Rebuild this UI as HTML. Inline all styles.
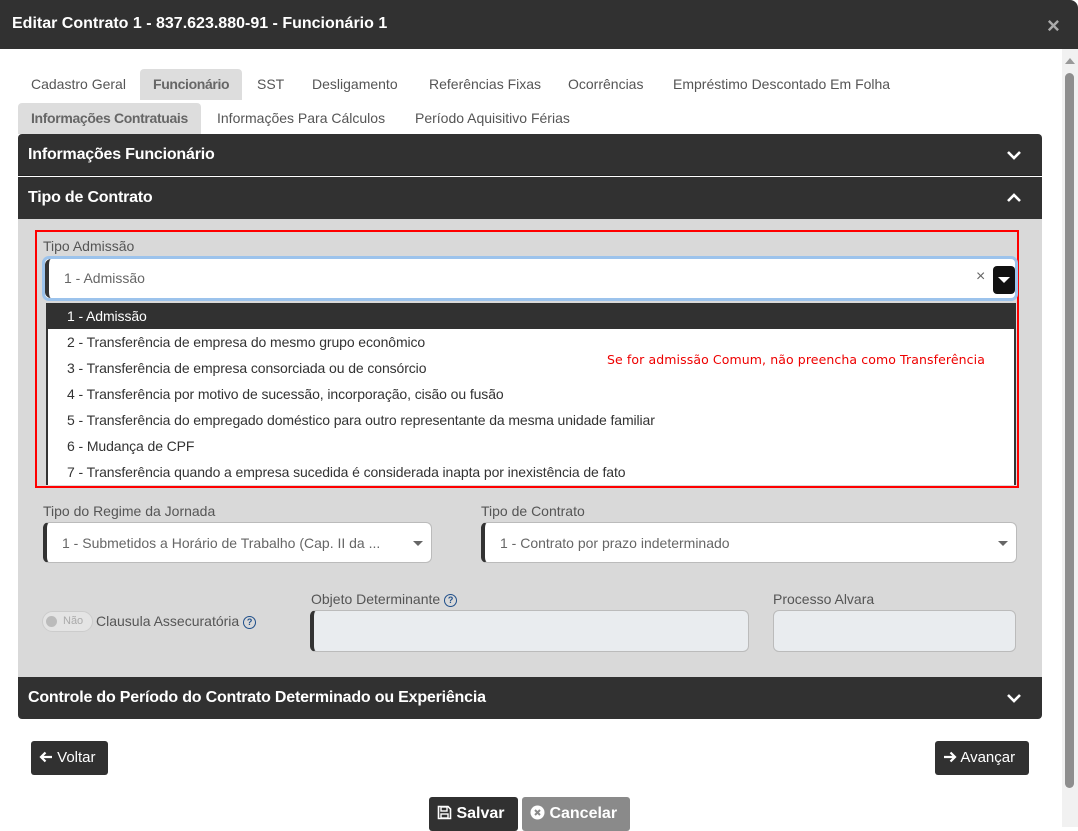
<!DOCTYPE html>
<html><head><meta charset="utf-8"><style>
*{box-sizing:border-box;margin:0;padding:0}
body{width:1078px;height:827px;overflow:hidden;background:#fff;font-family:"Liberation Sans",Arial,sans-serif;position:relative;color:#333}
.a{position:absolute}
.hdr{left:0;top:0;width:1078px;height:49px;background:#313131;border-radius:0 8px 0 0}
.hdr .t{left:12px;top:15px;color:#fff;font-weight:bold;font-size:16px}
.hdr .x{left:1047px;top:13px;color:#aaa;font-size:22px;font-weight:bold}
.tab{font-size:14px;color:#555;height:31px;line-height:31px;padding:0 13px}
.tab.on{background:#ddd;color:#666;font-weight:bold;border-radius:4px 4px 0 0;letter-spacing:-0.35px}
.acc{left:18px;width:1024px;height:42px;background:#313131;color:#fff;font-weight:bold;font-size:16px;line-height:42px;padding-left:10px;letter-spacing:-0.2px}
.chev{position:absolute;right:20px;top:15px}
.lbl{font-size:14px;color:#555}
.sel{background:#fff;border-radius:6px;border-left:4px solid #333;font-size:14px;color:#666;padding-left:15px}
.item{left:46px;width:970px;height:26px;line-height:26px;font-size:14px;color:#333;padding-left:21px;background:#fff;letter-spacing:-0.1px}
.btn{background:#313131;color:#fff;font-size:15px;border-radius:3px;height:34px;line-height:34px;padding:0 8px}
.inp{background:#e9ecef;border:1px solid #bbb;border-radius:6px}
.q{display:inline-block;width:13px;height:13px;border:1.3px solid #1f4f8a;border-radius:50%;font-size:9px;line-height:11px;text-align:center;color:#1f4f8a;font-weight:bold;vertical-align:1px}
</style></head><body>
<div class="a hdr"><div class="a t">Editar Contrato 1 - 837.623.880-91 - Funcionário 1</div><div class="a x">×</div></div>
<div class="a" style="left:1062px;top:49px;width:16px;height:778px;background:#f1f1f1"></div>
<div class="a" style="left:1065px;top:73px;width:9px;height:715px;background:#8e8e8e;border-radius:5px"></div>
<div class="a" style="left:1065px;top:58px;width:0;height:0;border-left:5px solid transparent;border-right:5px solid transparent;border-bottom:6px solid #999"></div>

<div class="a tab" style="left:18px;top:69px">Cadastro Geral</div>
<div class="a tab on" style="left:140px;top:69px">Funcionário</div>
<div class="a tab" style="left:244px;top:69px">SST</div>
<div class="a tab" style="left:299px;top:69px">Desligamento</div>
<div class="a tab" style="left:416px;top:69px">Referências Fixas</div>
<div class="a tab" style="left:555px;top:69px">Ocorrências</div>
<div class="a tab" style="left:660px;top:69px">Empréstimo Descontado Em Folha</div>
<div class="a tab on" style="left:18px;top:103px">Informações Contratuais</div>
<div class="a tab" style="left:204px;top:103px">Informações Para Cálculos</div>
<div class="a tab" style="left:402px;top:103px">Período Aquisitivo Férias</div>

<div class="a acc" style="top:134px;border-radius:4px 4px 0 0;border-bottom:1px solid #222">Informações Funcionário<svg class="chev" width="16" height="12" viewBox="0 0 16 12"><path d="M2 3l6 6 6-6" stroke="#fff" stroke-width="2.6" fill="none"/></svg></div>
<div class="a acc" style="top:177px">Tipo de Contrato<svg class="chev" width="16" height="12" viewBox="0 0 16 12"><path d="M2 9l6-6 6 6" stroke="#fff" stroke-width="2.6" fill="none"/></svg></div>
<div class="a" style="left:18px;top:219px;width:1024px;height:458px;background:#d9d9d9"></div>

<div class="a" style="left:35px;top:230px;width:984px;height:258px;border:2px solid #f00"></div>
<div class="a lbl" style="left:43px;top:238px">Tipo Admissão</div>
<div class="a" style="left:42px;top:256px;width:976px;height:45px;border:3px solid #9cc3ec;border-radius:7px;background:#fff"></div>
<div class="a sel" style="left:45px;top:259px;width:970px;height:39px;line-height:39px">1 - Admissão</div>
<div class="a" style="left:976px;top:268px;color:#666;font-size:16px">×</div>
<div class="a" style="left:993px;top:266px;width:22px;height:28px;background:#111;border-radius:4px"><div class="a" style="left:5px;top:11px;border-left:6px solid transparent;border-right:6px solid transparent;border-top:6px solid #fff"></div></div>
<div class="a" style="left:46px;top:303px;width:970px;height:182px;background:#fff;border-left:2px solid #333;border-right:2px solid #333"></div>
<div class="a item" style="top:303px;background:#313131;color:#fff">1 - Admissão</div>
<div class="a item" style="top:329px;left:48px;width:966px;padding-left:19px">2 - Transferência de empresa do mesmo grupo econômico</div>
<div class="a item" style="top:355px;left:48px;width:540px;padding-left:19px">3 - Transferência de empresa consorciada ou de consórcio</div>
<div class="a item" style="top:381px;left:48px;width:540px;padding-left:19px">4 - Transferência por motivo de sucessão, incorporação, cisão ou fusão</div>
<div class="a item" style="top:407px;left:48px;width:700px;padding-left:19px">5 - Transferência do empregado doméstico para outro representante da mesma unidade familiar</div>
<div class="a item" style="top:433px;left:48px;width:540px;padding-left:19px">6 - Mudança de CPF</div>
<div class="a item" style="top:459px;left:48px;width:700px;padding-left:19px">7 - Transferência quando a empresa sucedida é considerada inapta por inexistência de fato</div>
<div class="a" style="left:607px;top:352px;color:#e00;font-size:12.5px;font-family:'DejaVu Sans',sans-serif;letter-spacing:0.1px">Se for admissão Comum, não preencha como Transferência</div>

<div class="a lbl" style="left:43px;top:503px">Tipo do Regime da Jornada</div>
<div class="a sel" style="left:43px;top:522px;width:389px;height:41px;line-height:41px;border:1px solid #bbb;border-left:4px solid #333">1 - Submetidos a Horário de Trabalho (Cap. II da ...</div>
<div class="a" style="left:413px;top:541px;border-left:5px solid transparent;border-right:5px solid transparent;border-top:5px solid #666"></div>
<div class="a lbl" style="left:481px;top:503px">Tipo de Contrato</div>
<div class="a sel" style="left:481px;top:522px;width:536px;height:41px;line-height:41px;border:1px solid #bbb;border-left:4px solid #333">1 - Contrato por prazo indeterminado</div>
<div class="a" style="left:998px;top:541px;border-left:5px solid transparent;border-right:5px solid transparent;border-top:5px solid #666"></div>

<div class="a" style="left:42px;top:611px;width:51px;height:21px;border:1px solid #ccc;border-radius:11px;background:#e4e4e4"><div class="a" style="left:3px;top:4px;width:11px;height:11px;border-radius:50%;background:#bbb"></div><div class="a" style="left:20px;top:3px;font-size:11px;color:#aaa">Não</div></div>
<div class="a lbl" style="left:96px;top:613px">Clausula Assecuratória <span class="q">?</span></div>
<div class="a lbl" style="left:311px;top:591px">Objeto Determinante <span class="q">?</span></div>
<div class="a inp" style="left:310px;top:610px;width:439px;height:42px;border-left:4px solid #333"></div>
<div class="a lbl" style="left:773px;top:591px">Processo Alvara</div>
<div class="a inp" style="left:773px;top:610px;width:243px;height:42px"></div>

<div class="a acc" style="top:677px;border-radius:0 0 4px 4px">Controle do Período do Contrato Determinado ou Experiência<svg class="chev" width="16" height="12" viewBox="0 0 16 12"><path d="M2 3l6 6 6-6" stroke="#fff" stroke-width="2.6" fill="none"/></svg></div>

<div class="a btn" style="left:31px;top:741px;width:77px"><svg width="14" height="12" viewBox="0 0 14 12" style="vertical-align:-1px"><path d="M13 6H2M6.5 1.5L2 6l4.5 4.5" stroke="#fff" stroke-width="2.2" fill="none"/></svg> Voltar</div>
<div class="a btn" style="left:935px;top:741px;width:94px"><svg width="14" height="12" viewBox="0 0 14 12" style="vertical-align:-1px"><path d="M1 6h11M7.5 1.5L12 6l-4.5 4.5" stroke="#fff" stroke-width="2.2" fill="none"/></svg> Avançar</div>
<div class="a btn" style="left:429px;top:797px;width:89px;height:34px;font-weight:bold;font-size:16px"><svg width="15" height="15" viewBox="0 0 15 15" style="vertical-align:-2px"><path d="M1.5 1.5h9.5l2.5 2.5v9.5h-12z" stroke="#fff" stroke-width="1.6" fill="none"/><rect x="4" y="2" width="6" height="4" stroke="#fff" stroke-width="1.4" fill="none"/><rect x="4" y="9" width="7" height="4" stroke="#fff" stroke-width="1.4" fill="none"/></svg> Salvar</div>
<div class="a btn" style="left:522px;top:797px;width:108px;height:34px;font-weight:bold;font-size:16px;background:#8a8a8a"><svg width="15" height="15" viewBox="0 0 15 15" style="vertical-align:-2px"><circle cx="7.5" cy="7.5" r="7" fill="#fff"/><path d="M5 5l5 5M10 5l-5 5" stroke="#8a8a8a" stroke-width="2"/></svg> Cancelar</div>
</body></html>
